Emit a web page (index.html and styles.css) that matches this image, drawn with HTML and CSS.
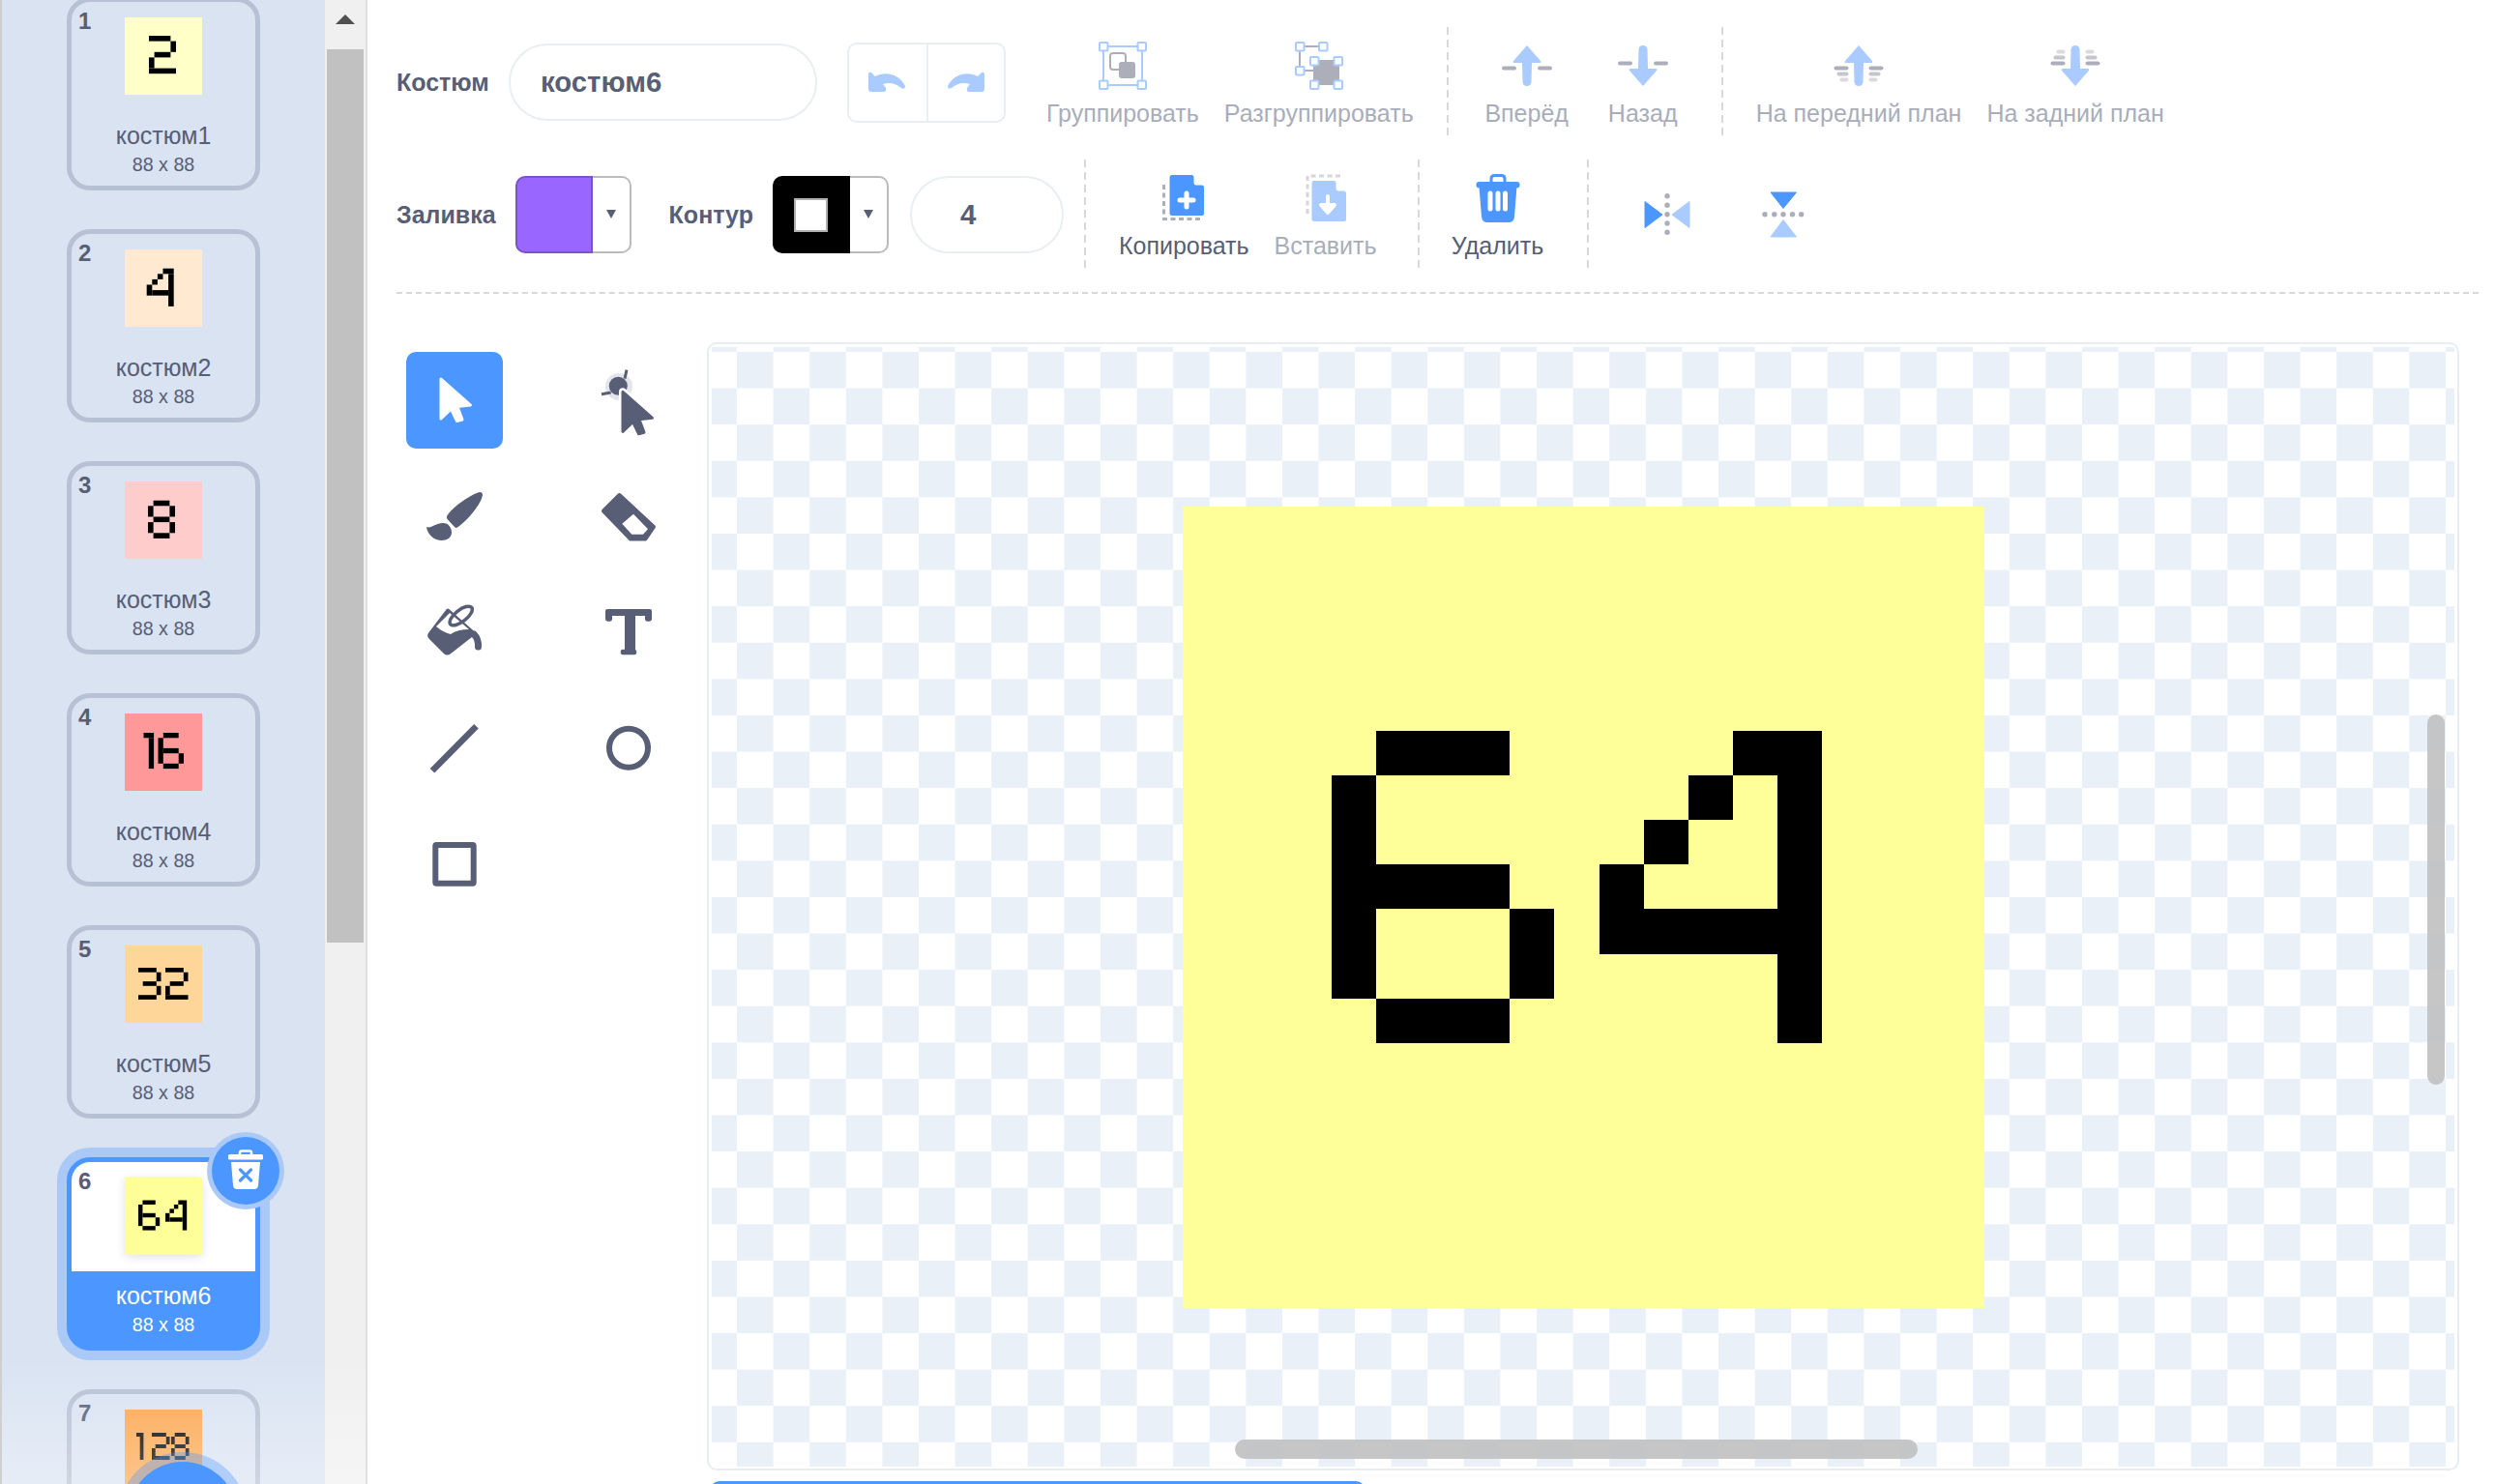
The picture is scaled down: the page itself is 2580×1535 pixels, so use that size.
FILE: index.html
```html
<!DOCTYPE html>
<html lang="ru">
  <head>
    <meta charset="UTF-8" />
    <title>Костюмы</title>
    <link rel="stylesheet" href="styles.css">
  </head>
  <body>
    <svg class="defs" width="0" height="0">
      <defs>
        <!-- 5x7 pixel digits of the costume bitmaps -->
        <g id="d1"><rect x="0" y="0" width="2" height="1"/><rect x="1" y="1" width="1" height="6"/></g>
        <g id="d2"><rect x="0" y="0" width="4" height="1"/><rect x="4" y="1" width="1" height="2"/><rect x="1" y="3" width="3" height="1"/><rect x="0" y="4" width="1" height="2"/><rect x="0" y="6" width="5" height="1"/></g>
        <g id="d3"><rect x="0" y="0" width="4" height="1"/><rect x="4" y="1" width="1" height="2"/><rect x="1" y="3" width="3" height="1"/><rect x="4" y="4" width="1" height="2"/><rect x="0" y="6" width="4" height="1"/></g>
        <g id="d4"><rect x="3" y="0" width="2" height="1"/><rect x="2" y="1" width="1" height="1"/><rect x="1" y="2" width="1" height="1"/><rect x="0" y="3" width="1" height="2"/><rect x="1" y="4" width="3" height="1"/><rect x="4" y="1" width="1" height="6"/></g>
        <g id="d6"><rect x="1" y="0" width="3" height="1"/><rect x="0" y="1" width="1" height="5"/><rect x="1" y="3" width="3" height="1"/><rect x="4" y="4" width="1" height="2"/><rect x="1" y="6" width="3" height="1"/></g>
        <g id="d8"><rect x="1" y="0" width="3" height="1"/><rect x="0" y="1" width="1" height="2"/><rect x="4" y="1" width="1" height="2"/><rect x="1" y="3" width="3" height="1"/><rect x="0" y="4" width="1" height="2"/><rect x="4" y="4" width="1" height="2"/><rect x="1" y="6" width="3" height="1"/></g>
        <path id="arrow" d="M30 4 L44 20 Q45 22 43 22 H35 L34.5 42 Q34 46 30 46 Q26 46 25.5 42 L25 22 H17 Q15 22 16 20 Z"/>
        <path id="pointer" d="M36 28 L66.5 55 L53 56.5 L58 70 L52.5 71.5 L46.5 59 L36 69 Z"/>
      </defs>
    </svg>

    <aside class="sidebar">
      <div class="costume-list">
        <div class="costume">
          <span class="costume-num">1</span>
          <svg class="thumb thumb-1" viewBox="0 0 80 80"><use href="#d2" transform="translate(25 19) scale(5.6)"/></svg>
          <div class="costume-info"><div class="costume-name">костюм1</div><div class="costume-size">88 x 88</div></div>
        </div>
        <div class="costume">
          <span class="costume-num">2</span>
          <svg class="thumb thumb-2" viewBox="0 0 80 80"><use href="#d4" transform="translate(22.7 19.7) scale(5.6)"/></svg>
          <div class="costume-info"><div class="costume-name">костюм2</div><div class="costume-size">88 x 88</div></div>
        </div>
        <div class="costume">
          <span class="costume-num">3</span>
          <svg class="thumb thumb-3" viewBox="0 0 80 80"><use href="#d8" transform="translate(24 19.7) scale(5.6)"/></svg>
          <div class="costume-info"><div class="costume-name">костюм3</div><div class="costume-size">88 x 88</div></div>
        </div>
        <div class="costume">
          <span class="costume-num">4</span>
          <svg class="thumb thumb-4" viewBox="0 0 80 80"><use href="#d1" transform="translate(19.5 20) scale(5.3)"/><use href="#d6" transform="translate(34.5 20) scale(5.3)"/></svg>
          <div class="costume-info"><div class="costume-name">костюм4</div><div class="costume-size">88 x 88</div></div>
        </div>
        <div class="costume">
          <span class="costume-num">5</span>
          <svg class="thumb thumb-5" viewBox="0 0 80 80"><use href="#d3" transform="translate(14 23) scale(4.7)"/><use href="#d2" transform="translate(42 23) scale(4.7)"/></svg>
          <div class="costume-info"><div class="costume-name">костюм5</div><div class="costume-size">88 x 88</div></div>
        </div>
        <div class="costume costume-selected">
          <span class="costume-num">6</span>
          <svg class="thumb thumb-6" viewBox="0 0 80 80"><use href="#d6" transform="translate(14 23.5) scale(4.44)"/><use href="#d4" transform="translate(42 23.5) scale(4.44)"/></svg>
          <div class="costume-info"><div class="costume-name">костюм6</div><div class="costume-size">88 x 88</div></div>
          <div class="costume-delete">
            <svg width="40" height="44" viewBox="0 0 40 44">
              <path d="M14 5 V3.5 Q14 1.500 16 1.500 H24 Q26 1.500 26 3.500 V5" fill="none" stroke="#fff" stroke-width="2.500"/>
              <rect x="2" y="5" width="36" height="5.500" rx="1.500" fill="#fff"/>
              <path d="M5 13 H35 L33 37 Q32.700 41 29 41 H11 Q7.300 41 7 37 Z" fill="#fff"/>
              <path d="M14.500 21 L25.500 32 M25.500 21 L14.500 32" stroke="#4c97ff" stroke-width="3.200" stroke-linecap="round"/>
            </svg>
          </div>
        </div>
        <div class="costume">
          <span class="costume-num">7</span>
          <svg class="thumb thumb-7" viewBox="0 0 80 80"><use href="#d1" transform="translate(12 24) scale(3.7 4)"/><use href="#d2" transform="translate(28 24) scale(3.7 4)"/><use href="#d8" transform="translate(48 24) scale(3.7 4)"/></svg>
        </div>
      </div>
      <div class="list-scrollbar">
        <div class="scroll-up"></div>
        <div class="scroll-thumb"></div>
      </div>
      <div class="list-fade"></div>
      <div class="add-button"></div>
    </aside>

    <main class="editor">
      <div class="toolbar">
        <div class="toolbar-row">
          <label class="field-label">Костюм</label>
          <input class="pill-input name-input" type="text" value="костюм6" />
          <div class="undo-group">
            <button class="undo-btn">
              <svg width="39" height="22" viewBox="0 0 39 22"><path d="M0 3 Q0 0 3 1 L7 5 C18 -1 32 3 38 15 Q38 19 34 17 C28 12 22 11 15 13 L18 17 Q19 21 15 21 H3 Q0 21 0 18 Z" fill="#a9cbff"/></svg>
            </button>
            <button class="undo-btn">
              <svg width="39" height="22" viewBox="0 0 39 22"><path transform="translate(39 0) scale(-1 1)" d="M0 3 Q0 0 3 1 L7 5 C18 -1 32 3 38 15 Q38 19 34 17 C28 12 22 11 15 13 L18 17 Q19 21 15 21 H3 Q0 21 0 18 Z" fill="#a9cbff"/></svg>
            </button>
          </div>
          <div class="tool-btn disabled first-tool">
            <svg class="icon" viewBox="0 0 60 50">
              <rect x="10" y="5" width="40" height="40" fill="none" stroke="#a9cbff" stroke-width="2"/>
              <rect x="17" y="12" width="16" height="17" rx="3" fill="none" stroke="#acaeb9" stroke-width="2"/>
              <rect x="26" y="21" width="17" height="17" rx="3" fill="#acaeb9"/>
              <g fill="#fff" stroke="#a9cbff" stroke-width="2">
                <rect x="6" y="1" width="8.500" height="8.500" rx="1"/><rect x="45.500" y="1" width="8.500" height="8.500" rx="1"/>
                <rect x="6" y="40.500" width="8.500" height="8.500" rx="1"/><rect x="45.500" y="40.500" width="8.500" height="8.500" rx="1"/>
              </g>
            </svg>
            <span>Группировать</span>
          </div>
          <div class="tool-btn disabled">
            <svg class="icon" viewBox="0 0 60 50">
              <path d="M15 5 H29 M10 10 V25 M15 30 H24" stroke="#acaeb9" stroke-width="2" fill="none"/>
              <rect x="24" y="19" width="27" height="26" fill="#acaeb9"/>
              <g fill="#fff" stroke="#a9cbff" stroke-width="2">
                <rect x="6" y="1" width="8.500" height="8.500" rx="1"/><rect x="30" y="1" width="8.500" height="8.500" rx="1"/>
                <rect x="6" y="26" width="8.500" height="8.500" rx="1"/>
                <rect x="21" y="16" width="8.500" height="8.500" rx="1"/><rect x="45.500" y="16" width="8.500" height="8.500" rx="1"/>
                <rect x="21" y="40.500" width="8.500" height="8.500" rx="1"/><rect x="45.500" y="40.500" width="8.500" height="8.500" rx="1"/>
              </g>
            </svg>
            <span>Разгруппировать</span>
          </div>
          <div class="dash-sep"></div>
          <div class="tool-btn disabled wide">
            <svg class="icon" viewBox="0 0 60 50">
              <rect x="4" y="25.500" width="15" height="4" rx="2" fill="#acaeb9"/><rect x="41" y="25.500" width="15" height="4" rx="2" fill="#acaeb9"/>
              <use href="#arrow" fill="#a9cbff"/>
            </svg>
            <span>Вперёд</span>
          </div>
          <div class="tool-btn disabled wide">
            <svg class="icon" viewBox="0 0 60 50">
              <g transform="translate(0 50) scale(1 -1)">
                <rect x="4" y="25.500" width="15" height="4" rx="2" fill="#acaeb9"/><rect x="41" y="25.500" width="15" height="4" rx="2" fill="#acaeb9"/>
                <use href="#arrow" fill="#a9cbff"/>
              </g>
            </svg>
            <span>Назад</span>
          </div>
          <div class="dash-sep"></div>
          <div class="tool-btn disabled">
            <svg class="icon" viewBox="0 0 60 50">
              <g fill="#acaeb9">
                <rect x="4.500" y="25.500" width="15" height="4" rx="2"/><rect x="40.500" y="25.500" width="15" height="4" rx="2"/>
                <rect x="7.500" y="31.500" width="12" height="4" rx="2" opacity=".7"/><rect x="40.500" y="31.500" width="12" height="4" rx="2" opacity=".7"/>
                <rect x="10.500" y="37.500" width="9" height="4" rx="2" opacity=".45"/><rect x="40.500" y="37.500" width="9" height="4" rx="2" opacity=".45"/>
              </g>
              <use href="#arrow" fill="#a9cbff"/>
            </svg>
            <span>На передний план</span>
          </div>
          <div class="tool-btn disabled">
            <svg class="icon" viewBox="0 0 60 50">
              <g transform="translate(0 50) scale(1 -1)">
                <g fill="#acaeb9">
                  <rect x="4.500" y="25.500" width="15" height="4" rx="2"/><rect x="40.500" y="25.500" width="15" height="4" rx="2"/>
                  <rect x="7.500" y="31.500" width="12" height="4" rx="2" opacity=".7"/><rect x="40.500" y="31.500" width="12" height="4" rx="2" opacity=".7"/>
                  <rect x="10.500" y="37.500" width="9" height="4" rx="2" opacity=".45"/><rect x="40.500" y="37.500" width="9" height="4" rx="2" opacity=".45"/>
                </g>
                <use href="#arrow" fill="#a9cbff"/>
              </g>
            </svg>
            <span>На задний план</span>
          </div>
        </div>

        <div class="toolbar-row">
          <label class="field-label">Заливка</label>
          <div class="color-picker fill-picker">
            <div class="swatch swatch-fill"></div>
            <div class="caret"><i></i></div>
          </div>
          <label class="field-label outline-label">Контур</label>
          <div class="color-picker outline-picker">
            <div class="swatch swatch-outline"><b></b></div>
            <div class="caret"><i></i></div>
          </div>
          <input class="pill-input width-input" type="text" value="4" />
          <div class="dash-sep"></div>
          <div class="tool-btn">
            <svg class="icon" viewBox="0 0 60 50">
              <path d="M9.500 11 V46.500 H50" fill="none" stroke="#acaeb9" stroke-width="3" stroke-dasharray="5 3.500"/>
              <path d="M18 1 H39 L51 13 V41 Q51 43 49 43 H18 Q15.500 43 15.500 41 V3 Q15.500 1 18 1 Z" fill="#4c97ff"/>
              <path d="M40.500 1 L51 11.500 H43 Q40.500 11.500 40.500 9 Z" fill="#fff"/>
              <path d="M33 20 V34 M26 27 H40" stroke="#fff" stroke-width="5" stroke-linecap="round"/>
            </svg>
            <span>Копировать</span>
          </div>
          <div class="tool-btn disabled">
            <svg class="icon" viewBox="0 0 60 50">
              <path d="M11 41 V2 H48" fill="none" stroke="#d5d6dc" stroke-width="3" stroke-dasharray="5 3.500"/>
              <path d="M18 7 H39 L51 19 V47 Q51 49 49 49 H18 Q15.500 49 15.500 47 V9 Q15.500 7 18 7 Z" fill="#a9cbff"/>
              <path d="M40.500 7 L51 17.500 H43 Q40.500 17.500 40.500 15 Z" fill="#fff"/>
              <path d="M32 23 V33 M32 40 L25 32 H39 Z" stroke="#fff" stroke-width="4" stroke-linecap="round" stroke-linejoin="round" fill="#fff"/>
            </svg>
            <span>Вставить</span>
          </div>
          <div class="dash-sep sep-far"></div>
          <div class="tool-btn wide-row2">
            <svg class="icon" viewBox="0 0 60 50">
              <path d="M23 9 V5 Q23 1.500 26.500 1.500 H33.500 Q37 1.500 37 5 V9" fill="none" stroke="#4c97ff" stroke-width="3"/>
              <rect x="7.500" y="8" width="45" height="6.500" rx="3" fill="#4c97ff"/>
              <path d="M10.500 13 H49.500 L47 44 Q46.500 50 41 50 H19 Q13.500 50 13 44 Z" fill="#4c97ff"/>
              <path d="M22 20 V36 M30 20 V36 M37.500 20 V36" stroke="#fff" stroke-width="5" stroke-linecap="round"/>
            </svg>
            <span>Удалить</span>
          </div>
          <div class="dash-sep sep-far sep-last"></div>
          <div class="tool-btn wide-row2 flip">
            <svg class="icon" viewBox="0 0 60 50">
              <path d="M7 11.500 L25 25 L7 38.500 Z" fill="#4c97ff" stroke="#4c97ff" stroke-width="1" stroke-linejoin="round"/>
              <path d="M53 11.500 L35 25 L53 38.500 Z" fill="#a9cbff" stroke="#a9cbff" stroke-width="1" stroke-linejoin="round"/>
              <g fill="#acaeb9"><circle cx="30" cy="5.700" r="2.700"/><circle cx="30" cy="15.300" r="2.700"/><circle cx="30" cy="24.700" r="2.700"/><circle cx="30" cy="34" r="2.700"/><circle cx="30" cy="43.300" r="2.700"/></g>
            </svg>
          </div>
          <div class="tool-btn wide-row2 flip">
            <svg class="icon" viewBox="0 0 60 50">
              <path d="M17 2 L30 18.500 L43.500 2 Z" fill="#4c97ff" stroke="#4c97ff" stroke-width="1" stroke-linejoin="round"/>
              <path d="M17 48 L30 30.500 L43.500 48 Z" fill="#a9cbff" stroke="#a9cbff" stroke-width="1" stroke-linejoin="round"/>
              <g fill="#acaeb9"><circle cx="11" cy="24.700" r="2.700"/><circle cx="20.800" cy="24.700" r="2.700"/><circle cx="30" cy="24.700" r="2.700"/><circle cx="39.500" cy="24.700" r="2.700"/><circle cx="48.700" cy="24.700" r="2.700"/></g>
            </svg>
          </div>
        </div>
      </div>

      <div class="workspace">
        <div class="tool-grid">
          <button class="draw-tool active">
            <svg viewBox="0 0 100 100"><use href="#pointer" fill="#fff" stroke="#fff" stroke-width="3" stroke-linejoin="round"/></svg>
          </button>
          <button class="draw-tool">
            <svg viewBox="0 0 100 100">
              <circle cx="40" cy="36" r="14" fill="#e4e5ea"/>
              <circle cx="39.300" cy="35.300" r="9.500" fill="#575e75"/>
              <path d="M48 18.700 L46 27.700 M22 43.700 L31.700 42" stroke="#575e75" stroke-width="3"/>
              <g transform="translate(8 13.300)"><use href="#pointer" fill="#575e75" stroke="#fff" stroke-width="8" stroke-linejoin="round"/><use href="#pointer" fill="#575e75" stroke="#575e75" stroke-width="3" stroke-linejoin="round"/></g>
            </svg>
          </button>
          <button class="draw-tool">
            <svg viewBox="0 0 100 100">
              <path d="M76 25 C68 27 49 39 42 50 Q41.500 52 43 53.500 L50 61 Q51.500 62.500 53 61.500 C63 55 78 37 79 28 Q79 25 76 25 Z" fill="#575e75"/>
              <path d="M21 61 C26 63 30 57 38 57 C44 57 47 62 47 67 C47 72 42 75 37 75 C29 75 22 69 21 61 Z" fill="#575e75"/>
            </svg>
          </button>
          <button class="draw-tool">
            <svg viewBox="0 0 100 100">
              <path d="M40.500 28 L76 61 L67.500 73.500 H52 L24 44.500 Z" fill="#575e75" stroke="#575e75" stroke-width="4" stroke-linejoin="round"/>
              <path d="M55 47.700 L43.300 57.700 L53.300 68.700 H65 L70 63.300 Z" fill="#fff"/>
            </svg>
          </button>
          <button class="draw-tool">
            <svg viewBox="0 0 100 100">
              <path d="M43 27 L24 52 Q23 54 25 56 L40 71 Q42.500 73 45 71 L68 53 Q70 51 68 49 Z" fill="#575e75" stroke="#575e75" stroke-width="3" stroke-linejoin="round"/>
              <path d="M31 44 L45 30 L65 47 Q53 47 46 52 Q38 50 31 44 Z" fill="#fff"/>
              <ellipse cx="56.700" cy="33" rx="14" ry="6" transform="rotate(-38 56.700 33)" fill="none" stroke="#575e75" stroke-width="3.500"/>
              <path d="M70 52 Q75 57 74.500 65" fill="none" stroke="#575e75" stroke-width="7" stroke-linecap="round"/>
            </svg>
          </button>
          <button class="draw-tool">
            <svg viewBox="0 0 100 100">
              <path d="M28 26 H72 Q74 26 74 28 V36 Q74 38.700 71 38.700 H69.500 Q67 38.700 67 36 V33 H57 V67.700 H56.500 Q58.300 67.700 58.300 70.500 Q58.300 73.300 56 73.300 H44 Q41.700 73.300 41.700 70.500 Q41.700 67.700 43.500 67.700 H46 V33 H33 V36 Q33 38.700 30.500 38.700 H29 Q26 38.700 26 36 V28 Q26 26 28 26 Z" fill="#575e75"/>
            </svg>
          </button>
          <button class="draw-tool">
            <svg viewBox="0 0 100 100"><path d="M27 73.200 L72.500 27.200" stroke="#575e75" stroke-width="6.500"/></svg>
          </button>
          <button class="draw-tool">
            <svg viewBox="0 0 100 100"><circle cx="50" cy="49.700" r="20" fill="none" stroke="#575e75" stroke-width="6"/></svg>
          </button>
          <button class="draw-tool">
            <svg viewBox="0 0 100 100"><rect x="30.300" y="30" width="39.400" height="39.700" rx="1" fill="none" stroke="#575e75" stroke-width="6"/></svg>
          </button>
        </div>

        <div class="canvas-col">
          <div class="canvas">
            <div class="checker">
              <svg class="costume-art" viewBox="0 0 829 829" shape-rendering="crispEdges">
                <use href="#d6" transform="translate(153.500 232) scale(46.100)"/>
                <use href="#d4" transform="translate(430.900 232) scale(46.100)"/>
              </svg>
            </div>
            <div class="canvas-scroll-h"></div>
            <div class="canvas-scroll-v"></div>
          </div>
          <div class="convert-button"></div>
        </div>
      </div>
    </main>
  </body>
</html>
```

FILE: styles.css
```css
* {
  box-sizing: border-box;
}

html,
body {
  height: 100%;
}

body {
  margin: 0;
  display: flex;
  overflow: hidden;
  background-color: #fff;
  color: #575e75;
  font-family: "Liberation Sans", Arial, sans-serif;
}

.defs {
  position: absolute;
}

/* costume list */
.sidebar {
  position: relative;
  flex: 0 0 380px;
  display: flex;
  height: 100%;
  overflow: hidden;
  border-left: 2px solid #cfcfcf;
  border-right: 2px solid #e0e0e0;
  background-color: #d9e3f2;
}

.costume-list {
  flex: 1;
  display: flex;
  flex-direction: column;
  gap: 40px;
  margin-top: -3px;
  padding-left: 67px;
}

.costume {
  position: relative;
  flex: 0 0 200px;
  width: 200px;
  border: 5px solid #b6c1d3;
  border-radius: 24px;
  text-align: center;
}

.costume-num {
  position: absolute;
  top: 6px;
  left: 7px;
  font-size: 24px;
  font-weight: bold;
  line-height: 28px;
}

.thumb {
  display: block;
  width: 80px;
  height: 80px;
  margin: 16px auto 0;
}

.thumb-1 { background-color: #ffffc8; }
.thumb-2 { background-color: #ffe9d0; }
.thumb-3 { background-color: #ffcccc; }
.thumb-4 { background-color: #ff9999; }
.thumb-5 { background-color: #ffd699; }
.thumb-6 { background-color: #ffff99; box-shadow: 0 2px 10px rgba(0, 0, 0, 0.12); }
.thumb-7 { background-color: #fca64e; }

.costume-info {
  margin-top: 17px;
  padding-top: 11px;
}

.costume-name {
  font-size: 25px;
  line-height: 28px;
}

.costume-size {
  margin-top: 3px;
  font-size: 19.700px;
  line-height: 26px;
}

.costume-selected {
  border-color: #4c97ff;
  box-shadow: 0 0 0 10px #aac9f6;
  background-color: #4c97ff;
  color: #fff;
}

.costume-selected .costume-num {
  z-index: 1;
  color: #575e75;
}

.costume-selected .thumb {
  position: relative;
}

.costume-selected::before {
  content: "";
  position: absolute;
  top: 0;
  left: 0;
  right: 0;
  height: 113px;
  border-radius: 19px 19px 0 0;
  background-color: #fff;
}

.costume-selected .costume-info {
  position: relative;
}

.costume-delete {
  position: absolute;
  top: -26px;
  right: -25px;
  z-index: 2;
  display: flex;
  align-items: center;
  justify-content: center;
  width: 70px;
  height: 70px;
  border-radius: 50%;
  background-color: #4c97ff;
  box-shadow: 0 0 0 5px #aac9f6;
}

.list-scrollbar {
  position: relative;
  flex: 0 0 42px;
  background-color: #f0f0f0;
}

.scroll-up {
  position: absolute;
  top: 15px;
  left: 11px;
  width: 0;
  height: 0;
  border-left: 10px solid transparent;
  border-right: 10px solid transparent;
  border-bottom: 10px solid #505050;
}

.scroll-thumb {
  position: absolute;
  top: 51px;
  left: 2px;
  right: 2px;
  height: 924px;
  background-color: #c1c1c1;
}

.list-fade {
  position: absolute;
  left: 0;
  right: 0;
  bottom: 0;
  height: 130px;
  background: linear-gradient(rgba(255, 255, 255, 0), rgba(255, 255, 255, 0.35));
}

.add-button {
  position: absolute;
  left: 130px;
  top: 1512px;
  width: 114px;
  height: 114px;
  border-radius: 50%;
  background-color: #4c97ff;
  box-shadow: 0 0 0 10px rgba(76, 151, 255, 0.35);
}

/* paint editor */
.editor {
  flex: 1;
  min-width: 0;
}

.toolbar {
  display: flex;
  flex-direction: column;
  gap: 23px;
  margin: 0 17px 0 30px;
  padding: 28px 0 23px;
  border-bottom: 2px dashed #d8d8d8;
}

.toolbar-row {
  display: flex;
  align-items: center;
  height: 114px;
}

.field-label {
  font-size: 25px;
  font-weight: bold;
  margin-right: 20px;
}

.pill-input {
  height: 80px;
  border: 2px solid #e9eef2;
  border-radius: 40px;
  outline: none;
  background-color: #fff;
  color: #575e75;
  font-family: inherit;
  font-size: 29.400px;
  font-weight: bold;
}

.name-input {
  width: 319px;
  padding-left: 31px;
}

.width-input {
  width: 159px;
  margin-left: 22px;
  padding-left: 50px;
}

.undo-group {
  display: flex;
  height: 83px;
  margin-left: 31px;
  border: 2px solid #e9eef2;
  border-radius: 10px;
}

.undo-btn {
  display: flex;
  align-items: center;
  justify-content: center;
  width: 80px;
  padding: 0;
  border: 0;
  background: none;
}

.undo-btn + .undo-btn {
  border-left: 2px solid #e9eef2;
}

.tool-btn {
  display: flex;
  flex-direction: column;
  align-items: center;
  align-self: stretch;
  padding: 15px 13px 0;
  font-size: 25px;
  line-height: 30px;
  white-space: nowrap;
}

.tool-btn span {
  margin-top: 9px;
}

.tool-btn.disabled {
  color: #a9adba;
}

.tool-btn.wide {
  width: 120px;
  padding-left: 0;
  padding-right: 0;
}

.tool-btn.wide-row2 {
  width: 120px;
  padding-left: 0;
  padding-right: 0;
}

.tool-btn.flip {
  justify-content: center;
  padding-top: 0;
}

.first-tool {
  margin-left: 29px;
}

.icon {
  display: block;
  flex: none;
  width: 60px;
  height: 50px;
}

.dash-sep {
  flex: none;
  align-self: stretch;
  width: 2px;
  margin: 0 21px;
  background: repeating-linear-gradient(#d8d8d8 0 8px, transparent 8px 13px);
}

.sep-far {
  margin-left: 29px;
}

.sep-last {
  margin-left: 32px;
}

.color-picker {
  display: flex;
  height: 80px;
}

.swatch {
  width: 80px;
  border-radius: 10px 0 0 10px;
}

.swatch-fill {
  border: 2px solid #7a52c9;
  background-color: #9966ff;
}

.swatch-outline {
  display: flex;
  align-items: center;
  justify-content: center;
  background-color: #000;
}

.swatch-outline b {
  display: block;
  width: 35px;
  height: 35px;
  border: 2px solid #b0b0b0;
  background-color: #fff;
}

.caret {
  display: flex;
  justify-content: center;
  width: 40px;
  padding-top: 33px;
  border: 2px solid #bbb;
  border-left: 0;
  border-radius: 0 10px 10px 0;
}

.caret i {
  width: 0;
  height: 0;
  border-left: 5.500px solid transparent;
  border-right: 5.500px solid transparent;
  border-top: 9px solid #575e75;
}

.outline-label {
  margin-left: 39px;
  margin-right: 20px;
}

/* tools and canvas */
.workspace {
  display: flex;
  align-items: flex-start;
  padding: 50px 0 0 40px;
}

.tool-grid {
  flex: none;
  display: grid;
  grid-template-columns: 100px 100px;
  grid-auto-rows: 100px;
  gap: 20px 80px;
  margin-top: 10px;
}

.draw-tool {
  padding: 0;
  border: 0;
  border-radius: 10px;
  background: none;
}

.draw-tool svg {
  display: block;
  width: 100px;
  height: 100px;
}

.draw-tool.active {
  background-color: #4c97ff;
}

.canvas-col {
  flex: none;
  margin-left: 31px;
}

.canvas {
  position: relative;
  width: 1812px;
  height: 1167px;
  padding: 3px 3px 2px;
  border: 2px solid #e8edf3;
  border-radius: 10px;
}

.checker {
  display: flex;
  align-items: center;
  justify-content: center;
  width: 100%;
  height: 100%;
  background-image: repeating-conic-gradient(#e9f0f8 0 25%, #fff 0 50%);
  background-size: 75.200px 75.200px;
  background-position: -11.600px 5px;
}

.costume-art {
  display: block;
  width: 829px;
  height: 829px;
  background-color: #ffff99;
}

.canvas-scroll-h {
  position: absolute;
  left: 544px;
  top: 1133px;
  width: 706px;
  height: 20px;
  border-radius: 10px;
  background-color: rgba(192, 192, 192, 0.9);
}

.canvas-scroll-v {
  position: absolute;
  left: 1777px;
  top: 383px;
  width: 18px;
  height: 383px;
  border-radius: 9px;
  background-color: rgba(192, 192, 192, 0.9);
}

.convert-button {
  width: 678px;
  height: 40px;
  margin: 11px 0 0 3px;
  border-radius: 10px;
  background-color: #4c97ff;
}
```
